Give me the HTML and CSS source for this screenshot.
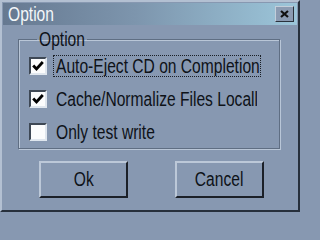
FILE: index.html
```html
<!DOCTYPE html>
<html>
<head>
<meta charset="utf-8">
<link rel="stylesheet" href="styles.css">
</head>
<body>
<div class="window">
  <div class="titlebar">
    <span class="title"><span class="nt t-title">Option</span></span>
    <span class="close">
      <svg width="9" height="8" viewBox="0 0 9 8"><path d="M1 1 L8 7 M8 1 L1 7" stroke="#111" stroke-width="2.2"/></svg>
    </span>
  </div>
  <fieldset class="group">
    <legend class="legend"><span class="nt t-legend">Option</span></legend>
    <div class="row">
      <span class="box"><svg width="14" height="14" viewBox="0 0 14 14"><path d="M2.2 6.5 L5.5 10 L11.8 3" fill="none" stroke="#000" stroke-width="2.8"/></svg></span>
      <span class="label focus"><span class="nt">Auto-Eject CD on Completion</span></span>
    </div>
    <div class="row">
      <span class="box"><svg width="14" height="14" viewBox="0 0 14 14"><path d="M2.2 6.5 L5.5 10 L11.8 3" fill="none" stroke="#000" stroke-width="2.8"/></svg></span>
      <span class="label clip"><span class="nt">Cache/Normalize Files Locally</span></span>
    </div>
    <div class="row">
      <span class="box"></span>
      <span class="label"><span class="nt">Only test write</span></span>
    </div>
  </fieldset>
  <div class="buttons">
    <span class="btn"><span class="nt c">Ok</span></span>
    <span class="btn"><span class="nt c">Cancel</span></span>
  </div>
</div>
</body>
</html>
```
FILE: styles.css
```css
html, body {
  margin: 0;
  padding: 0;
  background: #8798b1;
}
.window {
  width: 300px;
  height: 212px;
  box-sizing: border-box;
  border: 2px solid;
  border-color: #b3c0d2 #27303c #27303c #b3c0d2;
  padding: 1px;
  background: #8798b1;
  font-family: "Liberation Sans", Arial, sans-serif;
  font-size: 20px;
  color: #0e1218;
  display: flex;
  flex-direction: column;
  overflow: hidden;
}
/* narrow bitmap-like text: horizontally condensed */
.nt {
  display: inline-block;
  white-space: nowrap;
  transform: scaleX(0.78);
  transform-origin: left center;
}
.nt.c {
  transform-origin: center center;
}
.titlebar {
  height: 22px;
  flex: none;
  display: flex;
  align-items: center;
  padding: 0 3px 0 5px;
  background: linear-gradient(to right, #667991, #7d95ad 45%, #9cc6da);
}
.title {
  color: #f4f7fa;
  line-height: 22px;
}
.t-title, .t-legend {
  width: 46px;
}
.close {
  margin-left: auto;
  width: 19px;
  height: 16px;
  box-sizing: border-box;
  border: 1px solid;
  border-color: #c3ceda #2a323c #2a323c #c3ceda;
  background: #8b9bb2;
  display: flex;
  align-items: center;
  justify-content: center;
}
.group {
  margin: 4px 0 0 15px;
  width: 262px;
  box-sizing: border-box;
  padding: 0 0 5px 10px;
  border: 1px solid #5f6e83;
  box-shadow: 1px 1px 0 #b9c6d7, inset 1px 1px 0 #b9c6d7;
  display: flex;
  flex-direction: column;
  gap: 11px;
}
.legend {
  padding: 0 2px;
  margin-left: 8px;
  line-height: 20px;
}
.row {
  height: 22px;
  display: flex;
  align-items: center;
}
.row:first-of-type {
  margin-top: 6px;
}
.box {
  width: 18px;
  height: 18px;
  flex: none;
  box-sizing: border-box;
  border: 2px solid;
  border-color: #3e4855 #dfe6ee #dfe6ee #3e4855;
  background: #fbfcfd;
  display: flex;
  align-items: center;
  justify-content: center;
  margin-right: 6px;
}
.label {
  line-height: 20px;
  padding: 0 2px;
  border: 1px dotted transparent;
  white-space: nowrap;
}
.focus {
  border-color: #1a1f26;
  width: 208px;
  box-sizing: border-box;
  overflow: hidden;
}
.clip {
  width: 205px;
  box-sizing: border-box;
  overflow: hidden;
}
.buttons {
  display: flex;
  gap: 47px;
  margin: 12px 0 0 36px;
}
.btn {
  width: 89px;
  height: 37px;
  box-sizing: border-box;
  border: 2px solid;
  border-color: #bcc8d8 #1b2028 #1b2028 #bcc8d8;
  display: flex;
  align-items: center;
  justify-content: center;
  background: #8798b1;
}
```
